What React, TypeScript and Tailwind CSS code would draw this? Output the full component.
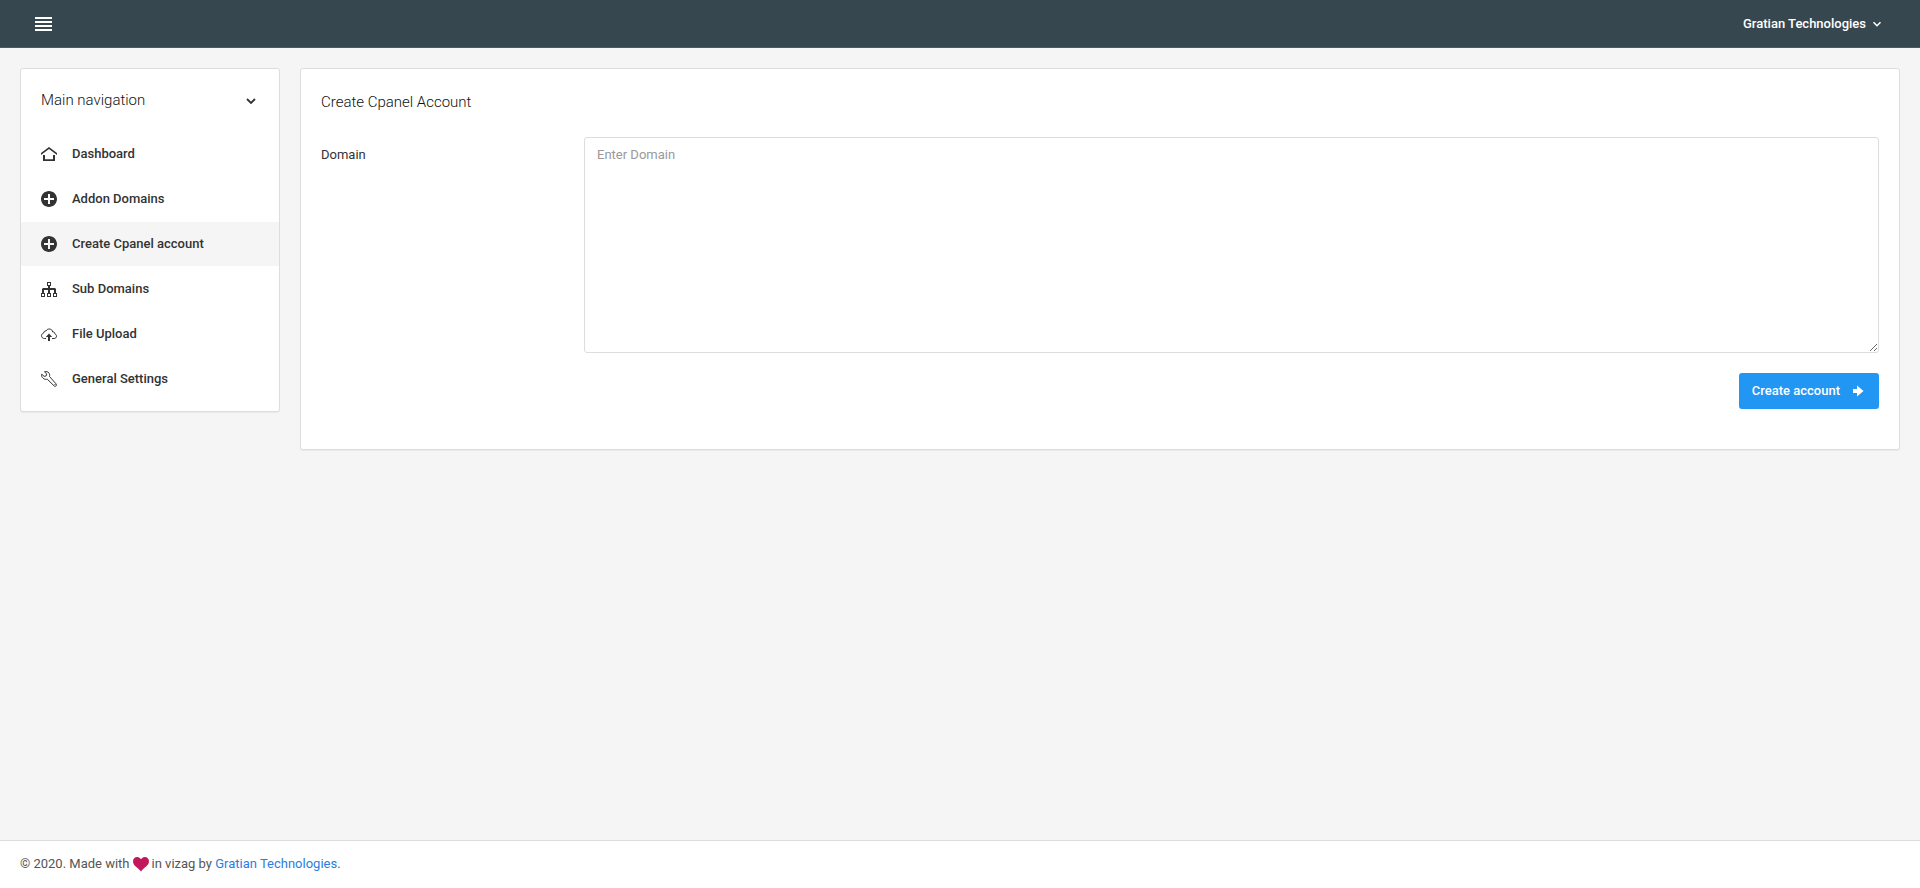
import { useState } from 'react';
import type { ReactNode } from 'react';
import { clsx } from 'clsx';

interface NavItem {
  label: string;
  icon: ReactNode;
}

interface IconProps {
  className?: string;
  children: ReactNode;
}

const Icon = ({ className, children }: IconProps) => (
  <svg
    viewBox="0 0 16 16"
    className={clsx('shrink-0', className || 'size-4')}
    fill="currentColor"
    aria-hidden="true"
  >
    {children}
  </svg>
);

const MenuIcon = () => (
  <svg viewBox="0 0 17 16" className="h-4 w-[17px]" fill="currentColor" aria-hidden="true">
    <path d="M0 1h17v2H0zM0 5h17v2H0zM0 9h17v2H0zM0 13h17v2H0z" />
  </svg>
);

const HomeIcon = () => (
  <Icon>
    <path d="M8 1L0 7v2l8-6 8 6V7z" />
    <path d="M2 9v6h12V9h-2v4.3H4V9z" />
  </Icon>
);

const PlusCircleIcon = () => (
  <Icon>
    <path d="M8 0C3.582 0 0 3.582 0 8s3.582 8 8 8 8-3.582 8-8-3.582-8-8-8zM13 9H9v4H7V9H3V7h4V3h2v4h4v2z" />
  </Icon>
);

const TreeIcon = () => (
  <Icon>
    <path
      fillRule="evenodd"
      d="M6 1h4v4H6zM7 2v2h2V2zM0 12h4v4H0zM1 13v2h2v-2zM6 12h4v4H6zM7 13v2h2v-2zM12 12h4v4h-4zM13 13v2h2v-2z"
    />
    <path d="M7 5h2v2h5l1 1v4h-2V9H9v3H7V9H3v3H1V8l1-1h5z" />
  </Icon>
);

const CloudUploadIcon = () => (
  <Icon>
    <path
      d="M5 12.5H3.4C1.8 12.5 0.5 11.3 0.5 9.7c0-1.4 1-2.4 2.2-2.7C2.7 5.5 3.7 4.8 5 5c0.6-1.3 1.8-2 3.2-2 2 0 3.3 1.3 3.5 3C13.2 5.8 14 6.8 13.9 8c1 0.3 1.6 1.2 1.6 2.2 0 1.3-1 2.3-2.3 2.3H11"
      fill="none"
      stroke="currentColor"
    />
    <path d="M8 7.5L4.8 11H7v4h2v-4h2.2z" />
  </Icon>
);

const WrenchIcon = () => (
  <Icon>
    <path
      d="M0.7 3.2l2.5 2.2 2-0.5 0.5-1.8L3.5 0.7c1.7-0.5 3.5 0 4.5 1.4 0.7 1 0.8 2.3 0.5 3.4l6.5 7.3c0.6 0.7 0.6 1.5 0.1 2.1-0.6 0.6-1.5 0.6-2.1-0.1L6.3 8.2c-1.3 0.4-2.9 0.2-4.1-0.9C0.8 6.2 0.3 4.7 0.7 3.2z"
      fill="none"
      stroke="currentColor"
    />
    <path d="M13.5 13h1v1h-1z" />
  </Icon>
);

const ChevronIcon = ({ className }: { className?: string }) => (
  <Icon className={className}>
    <path d="M4 6l4 4 4-4" fill="none" stroke="currentColor" strokeWidth="1.8" />
  </Icon>
);

const ArrowIcon = () => (
  <Icon>
    <path d="M3 6h4V2.6L13.5 8 7 13.4V10H3z" />
  </Icon>
);

const HeartIcon = () => (
  <Icon className="mx-[3px] inline-block size-4 align-[-4px] text-[#c2185b]">
    <path d="M11.8 1c-1.7 0-3.1 1.1-3.8 2.3C7.3 2.1 5.9 1 4.2 1 1.9 1 0 2.9 0 5.2c0 4.7 4.7 5.9 8 10.3 3.1-4.4 8-5.8 8-10.3C16 2.9 14.1 1 11.8 1z" />
  </Icon>
);

const navItems: NavItem[] = [
  { label: 'Dashboard', icon: <HomeIcon /> },
  { label: 'Addon Domains', icon: <PlusCircleIcon /> },
  { label: 'Create Cpanel account', icon: <PlusCircleIcon /> },
  { label: 'Sub Domains', icon: <TreeIcon /> },
  { label: 'File Upload', icon: <CloudUploadIcon /> },
  { label: 'General Settings', icon: <WrenchIcon /> },
];

const Navbar = () => (
  <header className="flex h-12 items-center justify-between border-b border-[#4b5b63] bg-[#37474f] pr-9 pl-[35px] text-white">
    <button type="button" aria-label="Toggle sidebar" className="cursor-pointer">
      <MenuIcon />
    </button>
    <button type="button" className="flex cursor-pointer items-center gap-1 font-medium">
      Gratian Technologies
      <ChevronIcon className="size-3.5" />
    </button>
  </header>
);

const Sidebar = () => {
  const [open, setOpen] = useState(true);
  const [active, setActive] = useState('Create Cpanel account');

  return (
    <aside className="w-[260px] shrink-0 rounded-[3px] border border-[#ddd] bg-white pb-2.5 shadow-[0_1px_1px_rgba(0,0,0,0.05)]">
      <div className="flex h-[63px] items-center justify-between px-5">
        <h2 className="pb-0.5 text-[15px] leading-6 font-light text-[#111]">Main navigation</h2>
        <button
          type="button"
          aria-label="Collapse navigation"
          aria-expanded={open}
          onClick={() => setOpen(!open)}
          className="cursor-pointer"
        >
          <ChevronIcon />
        </button>
      </div>
      {open && (
        <nav className="flex flex-col gap-px">
          {navItems.map((item) => (
            <a
              key={item.label}
              href="#"
              onClick={() => setActive(item.label)}
              className={clsx(
                'flex h-11 items-center gap-[15px] px-5 font-medium hover:bg-[#f5f5f5]',
                active === item.label && 'bg-[#f5f5f5]'
              )}
            >
              {item.icon}
              {item.label}
            </a>
          ))}
        </nav>
      )}
    </aside>
  );
};

const CreateAccountPanel = () => {
  const [domain, setDomain] = useState('');

  return (
    <main className="min-w-0 flex-1 rounded-[3px] border border-[#ddd] bg-white px-5 pt-[21px] pb-10 shadow-[0_1px_1px_rgba(0,0,0,0.05)]">
      <h1 className="mb-[23px] text-[15px] leading-6 font-light text-[#111]">
        Create Cpanel Account
      </h1>
      <form onSubmit={(e) => e.preventDefault()}>
        <div className="-mx-2.5 grid grid-cols-12">
          <label htmlFor="domain" className="col-span-2 px-2.5 pt-2">
            Domain
          </label>
          <div className="col-span-10 px-2.5">
            <textarea
              id="domain"
              value={domain}
              onChange={(e) => setDomain(e.target.value)}
              placeholder="Enter Domain"
              className="block h-54 w-full resize rounded-[3px] border border-[#ddd] px-3 py-[7px] outline-none placeholder:text-[#999] focus:border-[#2196f3]"
            />
          </div>
        </div>
        <div className="mt-5 flex justify-end">
          <button
            type="submit"
            className="flex h-9 cursor-pointer items-center gap-2.5 rounded-[3px] bg-[#2196f3] px-[13px] font-medium text-white"
          >
            Create account
            <ArrowIcon />
          </button>
        </div>
      </form>
    </main>
  );
};

const Footer = () => (
  <footer className="border-t border-[#ddd] bg-white px-5 pt-[13px] pb-3.5 text-[#555]">
    © 2020. Made with
    <HeartIcon />
    in vizag by{' '}
    <a href="#" className="text-[#2a7de1]">
      Gratian Technologies
    </a>
    .
  </footer>
);

export default function App() {
  return (
    <div className="flex min-h-screen flex-col bg-[#f5f5f5] font-[Roboto,sans-serif] text-[13px] leading-5 text-[#333]">
      <Navbar />
      <div className="flex flex-1 items-start gap-5 p-5">
        <Sidebar />
        <CreateAccountPanel />
      </div>
      <Footer />
    </div>
  );
}
